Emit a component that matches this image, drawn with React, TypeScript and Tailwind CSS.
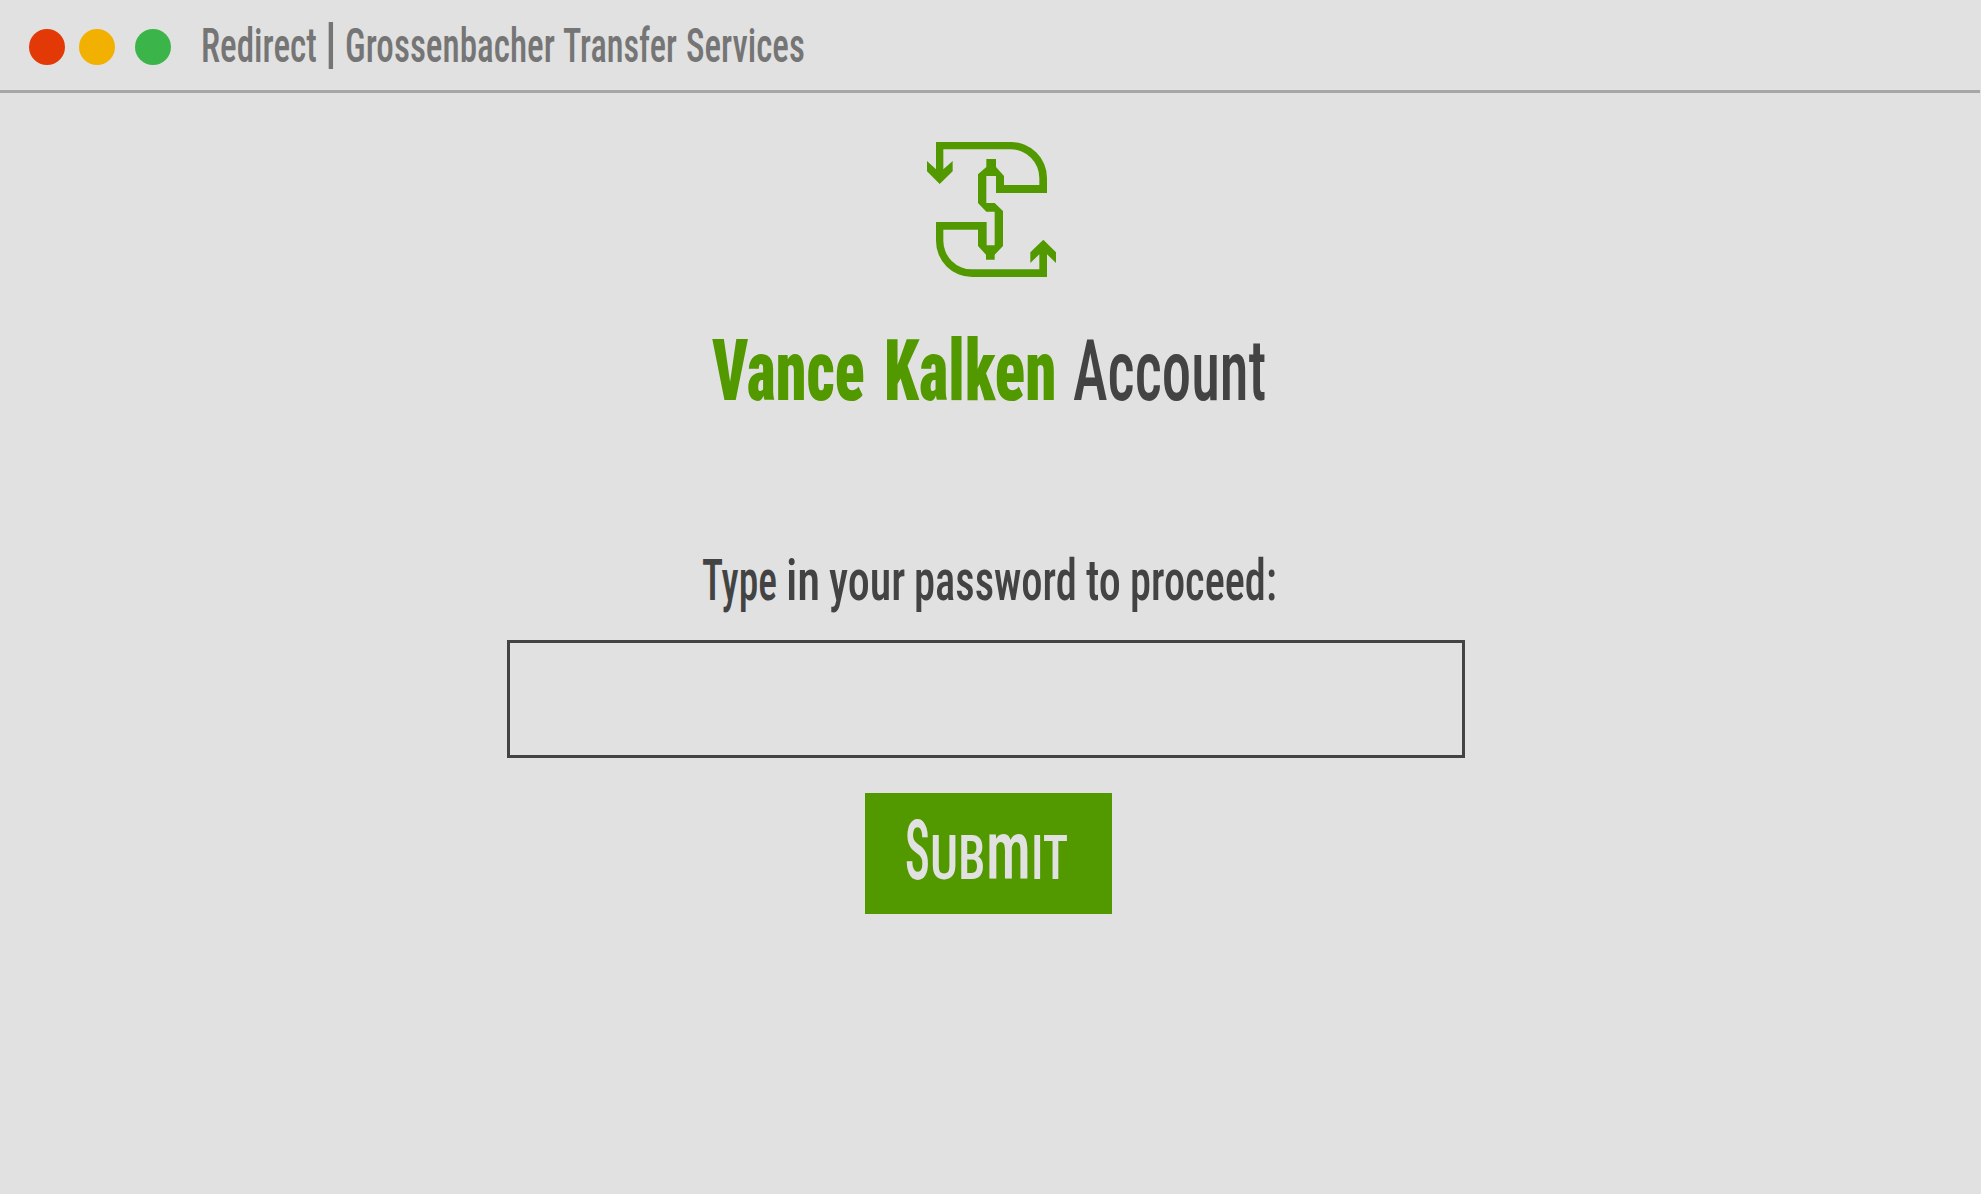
import { useLayoutEffect, useRef, useState } from 'react';

type WordProps = { text: string; width: number; className?: string; gap?: string };

/** A word set in condensed lettering, fitted to the given width. */
function Word({ text, width, className = '', gap = '' }: WordProps) {
  const ref = useRef<HTMLSpanElement>(null);
  const [scale, setScale] = useState(1);

  useLayoutEffect(() => {
    const natural = ref.current?.offsetWidth;
    if (natural) setScale(width / natural);
  }, [width, text]);

  return (
    <span className={`block shrink-0 ${gap}`} style={{ width }}>
      <span
        ref={ref}
        className={`inline-block origin-left whitespace-nowrap ${className}`}
        style={{ transform: `scaleX(${scale})` }}
      >
        {text}
      </span>
    </span>
  );
}

function TransferLogo() {
  return (
    <svg viewBox="51 36 387 405" className="h-[135px] w-[129px] fill-[#529900]" aria-hidden="true">
      <path d="M78 36H303A108 108 0 0 1 411 144V189H258V138H229V219H254L279 243V348L254 374V389H228V374L204 348V299H100V332A86 86 0 0 0 186 418H388V373L361 399V367L400 329L438 367V399L411 373V441H186A108 108 0 0 1 78 333V276H230V346H254V245H229L204 219V133L229 111V87H258V111L282 138V165H388V144A86 86 0 0 0 302 58H100V118L128 93V124L89 162L51 124V93L78 118Z" />
    </svg>
  );
}

export default function App() {
  return (
    <div className="flex h-[1194px] w-full flex-col overflow-hidden bg-[#e1e1e1] font-['Roboto',sans-serif] leading-none font-medium text-[#434343] [font-stretch:75%]">
      <header className="mr-px flex h-[93px] shrink-0 border-b-[3px] border-[#a6a6a6] pl-[29px]">
        <div className="flex pt-[29px]">
          <span className="size-9 rounded-full bg-[#e23906]" />
          <span className="ml-[14px] size-9 rounded-full bg-[#f2b000]" />
          <span className="ml-5 size-9 rounded-full bg-[#3bb54a]" />
        </div>
        <h1 className="ml-[30px] flex items-baseline pt-[16px] text-[49px] text-[#757575]">
          <Word text="Redirect" width={116} />
          <Word text="|" width={14} gap="ml-[7px]" className="text-[55px]" />
          <Word text="Grossenbacher" width={210} gap="ml-[7px]" />
          <Word text="Transfer" width={114} gap="ml-[8px]" />
          <Word text="Services" width={119} gap="ml-[9px]" />
        </h1>
      </header>

      <main className="flex flex-col">
        <div className="mt-[49px] ml-[927px]">
          <TransferLogo />
        </div>

        <h2 className="mt-[52px] ml-[712px] flex text-[85px]">
          <Word text="Vance" width={153} className="font-black text-[#529900]" />
          <Word text="Kalken" width={172} gap="ml-[19px]" className="font-black text-[#529900]" />
          <Word text="Account" width={193} gap="ml-[17px]" />
        </h2>

        <form onSubmit={(e) => e.preventDefault()} className="flex flex-col">
          <label htmlFor="password" className="mt-[137px] ml-[702px] flex h-[60px] gap-[9px] text-[58px]">
            <Word text="Type" width={75} />
            <Word text="in" width={34} />
            <Word text="your" width={76} />
            <Word text="password" width={163} />
            <Word text="to" width={35} />
            <Word text="proceed:" width={147} />
          </label>

          <input
            id="password"
            type="password"
            className="mt-[29px] ml-[507px] h-[118px] w-[958px] border-[3px] border-[#434343] bg-transparent px-8 text-5xl outline-none"
          />

          <button
            type="submit"
            className="mt-[35px] ml-[865px] flex h-[121px] w-[247px] items-baseline bg-[#529900] pt-[16px] pl-[40px] text-[84px] text-[#e1e1e1]"
          >
            <Word text="S" width={25} />
            <Word text="ub" width={56} className="text-[62px] uppercase" />
            <Word text="m" width={45} className="text-[84px]" />
            <Word text="it" width={37} className="text-[62px] uppercase" />
          </button>
        </form>
      </main>
    </div>
  );
}
